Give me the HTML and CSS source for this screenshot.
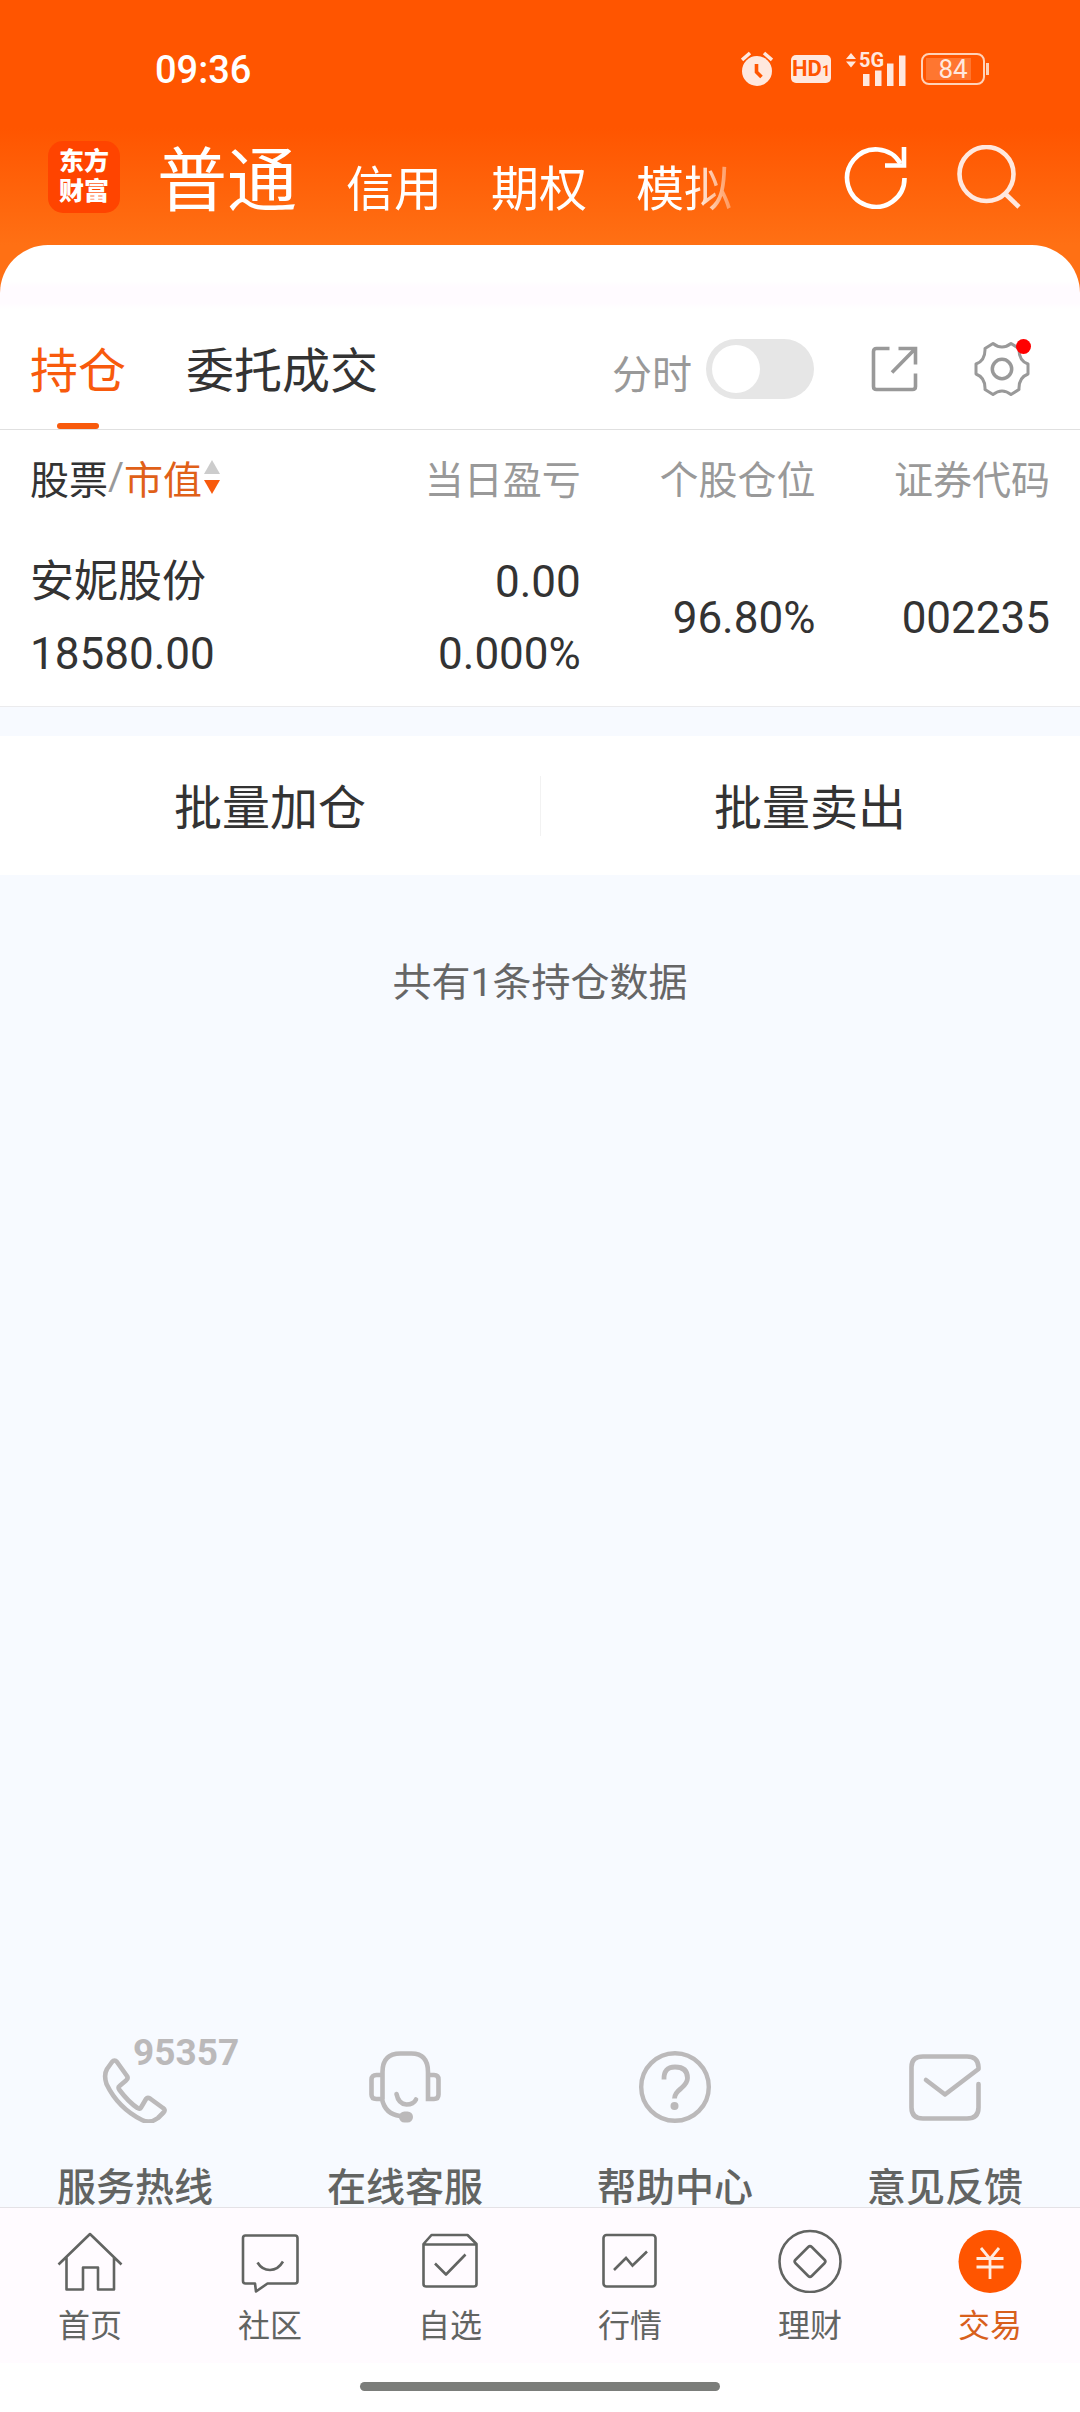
FILE: index.html
```html
<!DOCTYPE html>
<html lang="zh-CN">
<head>
<meta charset="utf-8">
<meta name="viewport" content="width=device-width, initial-scale=1">
<title>东方财富 - 交易</title>
<link rel="stylesheet" href="styles.css">
</head>
<body>
<header class="top">
  <div class="status">
    <span class="clock">09:36</span>
    <div class="status-icons">
      <svg class="alarm" width="32" height="36" viewBox="0 0 32 36" aria-hidden="true">
        <circle cx="16" cy="20" r="15" fill="currentColor"/>
        <path d="M1 9 9 2M31 9 23 2" stroke="currentColor" stroke-width="3.6"/>
        <path d="M15.500 13v8l5 5" fill="none" stroke="#ff5500" stroke-width="3.6"/>
      </svg>
      <span class="hd">HD<small>1</small></span>
      <span class="signal">
        <svg width="60" height="34" viewBox="0 0 60 34" aria-hidden="true">
          <path d="M0 7 5 1l5 6zM0 9.500h10l-5 6z" fill="currentColor"/>
          <path d="M17 22h6.500v12H17zM29 18.500h6.500V34H29zM41 11.500h6.500V34H41zM53 3.500h6.500V34H53z" fill="currentColor"/>
        </svg>
        <span class="net">5G</span>
      </span>
      <span class="battery"><span class="level">84</span></span>
    </div>
  </div>
  <div class="titlebar">
    <a class="logo" href="#"><span>东方</span><span>财富</span></a>
    <nav class="accounts" aria-label="账户">
      <a class="current" href="#">普通</a>
      <a href="#">信用</a>
      <a href="#">期权</a>
      <a href="#">模拟</a>
    </nav>
    <div class="title-actions">
      <button type="button" aria-label="刷新">
        <svg width="64" height="64" viewBox="0 0 64 64" fill="none" stroke="currentColor" stroke-width="4.600">
          <path d="M60.500 33A28.700 28.700 0 1 1 56.500 18.500"/>
          <path d="M60 2v18.500H41"/>
        </svg>
      </button>
      <button class="search" type="button" aria-label="搜索">
        <svg width="64" height="64" viewBox="0 0 64 64" fill="none" stroke="currentColor" stroke-width="4.600">
          <circle cx="29.500" cy="29" r="27"/>
          <path d="M48 48.500 62 62"/>
        </svg>
      </button>
    </div>
  </div>
  <div class="sheet-cap"></div>
</header>

<main class="content">
  <div class="tabs">
    <a class="tab active" href="#">持仓</a>
    <a class="tab" href="#">委托成交</a>
    <div class="tools">
      <label class="switch"><span>分时</span><input type="checkbox" role="switch"></label>
      <button type="button" aria-label="分享">
        <svg width="48" height="48" viewBox="0 0 48 48" fill="none" stroke="currentColor" stroke-width="3.600">
          <path d="M19.500 3.500H6.500q-3 0-3 3v35q0 3 3 3h36q3 0 3-3V28.500"/>
          <path d="M28.500 3.500H45.500V19.500M45 4 22 27.500"/>
        </svg>
      </button>
      <button class="gear" type="button" aria-label="设置">
        <svg width="56" height="56" viewBox="-28 -28 56 56" fill="none" stroke="currentColor" stroke-width="3" stroke-linejoin="round">
          <path d="M-9-25.500Q0-18.500 9-25.500L17-20.500Q16.500-8.500 26-5V5Q16.500 8.500 17 20.500L9 25.500Q0 18.500-9 25.500L-17 20.500Q-16.500 8.500-26 5V-5Q-16.500-8.500-17-20.500Z"/>
          <circle r="9.700" stroke-width="3.500"/>
        </svg>
      </button>
    </div>
  </div>

  <table class="holdings">
    <colgroup><col><col class="profit"><col class="share"><col class="code"></colgroup>
    <thead>
      <tr>
        <th scope="col"><span class="sort"><b>股票</b><i>/</i><em>市值</em>
          <svg width="16" height="34" viewBox="0 0 16 34" aria-hidden="true"><path d="M0 14 8 0l8 14z" fill="#ccc"/><path d="M0 20h16L8 34z" fill="#f85a0c"/></svg></span></th>
        <th scope="col">当日盈亏</th>
        <th scope="col">个股仓位</th>
        <th scope="col">证券代码</th>
      </tr>
    </thead>
    <tbody>
      <tr>
        <td>安妮股份<br>18580.00</td>
        <td>0.00<br>0.000%</td>
        <td>96.80%</td>
        <td>002235</td>
      </tr>
    </tbody>
  </table>

  <div class="batch">
    <button type="button">批量加仓</button>
    <button type="button">批量卖出</button>
  </div>

  <p class="total">共有1条持仓数据</p>

  <div class="services">
    <a class="hotline" href="#">
      <span class="number">95357</span>
      <svg width="72" height="72" viewBox="0 0 72 72" fill="none" stroke="currentColor" stroke-width="4.600" stroke-linejoin="round">
        <path d="M13 11q2.500-3 5 0L28 25q1.500 2.500-1 4.500L20.500 35q-2 1.500 0 4 9 12 18 18 2 1.500 3.500-.500L47 48q1.500-2 4-.500L64 57q3 2 .500 4.500L59 67q-8 6-16 2Q19 57 7.500 33 4.500 24 8 18Z"/>
      </svg>
      服务热线
    </a>
    <a href="#">
      <svg width="72" height="72" viewBox="0 0 72 72" fill="none" stroke="currentColor" stroke-width="4.600" stroke-linecap="round">
        <path d="M13.500 48V21q0-18.500 18-18.500h11q16.500 0 16.500 18.500V48h6q4.500 0 4.500-4.500v-15q0-4.500-4.500-4.500h-5M13 24H7.500q-5 0-5 4.500v15q0 4.500 5 4.500H13q3 15 18 17"/>
        <path d="M27.500 43q2 10 10 10.500 7 0 9.500-5"/>
        <rect x="30" y="60.500" width="14" height="11" rx="5.500" fill="currentColor" stroke="none"/>
      </svg>
      在线客服
    </a>
    <a href="#">
      <svg width="72" height="72" viewBox="0 0 72 72" fill="none" stroke="currentColor" stroke-width="4.400">
        <circle cx="36" cy="36" r="33.800"/>
        <path d="M25 28.500q-.500-12.500 11-12.500 12.500 0 12.500 11 0 5-6.500 10.500-6.500 5-6.500 10" stroke-width="4.800"/>
        <circle cx="35.500" cy="55" r="4" fill="currentColor" stroke="none"/>
      </svg>
      帮助中心
    </a>
    <a href="#">
      <svg width="72" height="72" viewBox="0 0 72 72" fill="none" stroke="currentColor" stroke-width="4.600" stroke-linecap="round" stroke-linejoin="round">
        <path d="M17 29 36 43.500 69.500 18V16Q69 5.500 58 5.500H14Q2.500 5.500 2.500 16V56.500Q2.500 67.500 14 67.500H58Q69.500 67.500 69.500 56.500V33"/>
      </svg>
      意见反馈
    </a>
  </div>
</main>

<nav class="bottom-nav" aria-label="主导航">
  <a href="#">
    <svg width="66" height="64" viewBox="0 0 66 64" fill="none" stroke="currentColor" stroke-width="2.600" stroke-linejoin="round">
      <path d="M1.500 35.500 33 5 64.500 35.500M9.500 28.500V60.500H26V38.500H41V60.500H57V28.500"/>
    </svg>
    首页
  </a>
  <a href="#">
    <svg width="66" height="64" viewBox="0 0 66 64" fill="none" stroke="currentColor" stroke-width="2.600" stroke-linejoin="round">
      <path d="M8 6.500H58q2.500 0 2.500 2.500V52q0 2.500-2.500 2.500H30.500L19 62.500 18 54.500H8.500Q6 54.500 6 52V9Q6 6.500 8.500 6.500Z"/>
      <path d="M20.500 33.500Q25 41 33 41T46 32.500"/>
    </svg>
    社区
  </a>
  <a href="#">
    <svg width="66" height="64" viewBox="0 0 66 64" fill="none" stroke="currentColor" stroke-width="2.600" stroke-linejoin="round">
      <path d="M6.500 15 14.500 6H50.500L59.500 15V55q0 2.500-2.500 2.500H9q-2.500 0-2.500-2.500ZM6.500 15.500H59.500"/>
      <path d="M18 34.500 29 45.500 48.500 25.500"/>
    </svg>
    自选
  </a>
  <a href="#">
    <svg width="66" height="64" viewBox="0 0 66 64" fill="none" stroke="currentColor" stroke-width="2.600">
      <rect x="6.500" y="6" width="52" height="51.500" rx="3"/>
      <path d="M17 41 29 29 35.500 36.500 50 22.500"/>
    </svg>
    行情
  </a>
  <a href="#">
    <svg width="66" height="64" viewBox="0 0 66 64" fill="none" stroke="currentColor" stroke-width="2.600">
      <circle cx="33" cy="32.500" r="30.500"/>
      <rect x="21.500" y="21" width="23" height="23" rx="2.500" transform="rotate(45 33 32.500)"/>
    </svg>
    理财
  </a>
  <a class="current" href="#">
    <svg width="66" height="64" viewBox="0 0 66 64" fill="none">
      <circle cx="33" cy="32.500" r="31.500" fill="#ff5500"/>
      <path d="M24 19 33 30 42 19M33 30V50M19.500 29.500H46.500M19.500 38H46.500" stroke="#ffece0" stroke-width="2.800"/>
    </svg>
    交易
  </a>
</nav>
<div class="home-indicator"></div>
</body>
</html>
```
FILE: styles.css
```css
* {
  box-sizing: border-box;
}

body {
  margin: 0;
  min-height: 100vh;
  display: flex;
  flex-direction: column;
  background: #fff;
  color: #333;
  font-family: Roboto, "Noto Sans CJK SC", sans-serif;
}

a {
  color: inherit;
  text-decoration: none;
}

button {
  margin: 0;
  padding: 0;
  border: 0;
  background: none;
  color: inherit;
  font: inherit;
}

svg {
  display: block;
}

/* Header */
.top {
  background: linear-gradient(#ff5500 128px, #ff7014 245px);
  color: #fff;
}

.status {
  height: 138px;
  padding: 0 95px 0 155px;
  display: flex;
  align-items: center;
  justify-content: space-between;
}

.clock {
  padding-top: 2px;
  font-size: 38px;
  font-weight: 500;
}

.status-icons {
  display: flex;
  align-items: center;
  gap: 15px;
  color: #ffe8de;
}

.alarm {
  margin-right: 3px;
}

.hd {
  width: 40px;
  height: 28px;
  border-radius: 5px;
  background: #ffe8de;
  color: #ff5500;
  font-size: 22px;
  font-weight: 700;
  line-height: 28px;
  text-align: center;
  white-space: nowrap;
}

.hd small {
  font-size: 14px;
}

.signal {
  position: relative;
}

.net {
  position: absolute;
  left: 13px;
  top: 0;
  font-size: 20px;
  font-weight: 700;
  line-height: 17px;
}

.battery {
  position: relative;
  width: 64px;
  height: 32px;
  padding: 3px;
  border: 2px solid #ffd2b8;
  border-radius: 8px;
}

.battery::after {
  content: "";
  position: absolute;
  right: -6px;
  top: 8px;
  width: 3px;
  height: 12px;
  background: #ffd2b8;
}

.level {
  display: block;
  height: 22px;
  background: linear-gradient(to right, #ff7630 84%, transparent 84%);
  color: #ffe8de;
  font-size: 26px;
  line-height: 22px;
  text-align: center;
}

.titlebar {
  height: 78px;
  padding: 0 59px 0 48px;
  display: flex;
  align-items: center;
}

.logo {
  width: 72px;
  height: 72px;
  border-radius: 15px;
  background: #ff4400;
  display: flex;
  flex-direction: column;
  align-items: center;
  justify-content: center;
  font-size: 25px;
  font-weight: 900;
  line-height: 30px;
}

.accounts {
  margin: 0 auto 0 37px;
  padding-top: 18px;
  display: flex;
  align-items: baseline;
  gap: 49px;
  font-size: 48px;
  line-height: 78px;
  white-space: nowrap;
  mask-image: linear-gradient(to right, #000 calc(100% - 40px), rgba(0, 0, 0, 0.3));
}

.accounts .current {
  font-size: 70px;
}

.title-actions {
  display: flex;
  gap: 49px;
}

.search {
  color: #ffe8de;
}

.sheet-cap {
  height: 64px;
  margin-top: 29px;
  border-radius: 48px 48px 0 0;
  background: linear-gradient(#fff 36px, #fffbff 42px, #fffbff 58px, #fff);
}

/* Content */
.content {
  flex: 1;
  display: flex;
  flex-direction: column;
  background: #f7faff;
}

.tabs {
  height: 121px;
  padding: 0 50px 0 30px;
  border-bottom: 1px solid #e0e0e0;
  background: #fff;
  display: flex;
  align-items: stretch;
  gap: 60px;
  font-size: 48px;
}

.tab {
  position: relative;
  line-height: 126px;
}

.tab.active {
  color: #f85a0c;
}

.tab.active::after {
  content: "";
  position: absolute;
  left: calc(50% - 21px);
  bottom: 0;
  width: 42px;
  height: 6px;
  border-radius: 3px;
  background: #f85a0c;
}

.tools {
  margin-left: auto;
  display: flex;
  align-items: center;
  gap: 56px;
  color: #999;
}

.switch {
  display: flex;
  align-items: center;
  gap: 14px;
  font-size: 40px;
}

.switch span {
  padding-top: 5px;
}

.switch input {
  appearance: none;
  width: 108px;
  height: 60px;
  margin: 0;
  padding: 6px;
  border-radius: 30px;
  background: #e6e6e6;
}

.switch input::before {
  content: "";
  display: block;
  width: 48px;
  height: 48px;
  border-radius: 50%;
  background: #fff;
}

.switch input:checked {
  background: #f85a0c;
}

.switch input:checked::before {
  margin-left: auto;
}

.gear {
  position: relative;
}

.gear::after {
  content: "";
  position: absolute;
  right: -1px;
  top: -2px;
  width: 15px;
  height: 15px;
  border-radius: 50%;
  background: #f00;
}

.holdings {
  width: 100%;
  padding: 0 30px;
  border-spacing: 0;
  border-bottom: 1px solid #ebebed;
  background: #fff;
  table-layout: fixed;
  text-align: right;
}

.profit {
  width: 25%;
}

.share,
.code {
  width: 23%;
}

.holdings th {
  height: 100px;
  padding: 0 0 6px;
  color: #999;
  font-size: 39px;
  font-weight: 400;
  text-align: right;
}

.holdings td {
  height: 176px;
  padding: 0;
  font-size: 44px;
  line-height: 72px;
}

.holdings th:first-child,
.holdings td:first-child {
  text-align: left;
}

.sort {
  display: flex;
  align-items: center;
}

.sort b,
.sort i,
.sort em {
  font-style: normal;
  font-weight: 400;
}

.sort b {
  color: #333;
}

.sort em {
  color: #e06018;
}

.sort svg {
  margin-left: 2px;
}

.batch {
  margin-top: 29px;
  background: #fff;
  display: flex;
}

.batch button {
  flex: 1;
  height: 139px;
  padding-bottom: 3px;
  font-size: 48px;
}

.batch button + button {
  background: linear-gradient(#f2f2f2, #f2f2f2) left center / 1px 60px no-repeat;
}

.total {
  margin: 78px 0;
  color: #666;
  font-size: 39px;
  line-height: 60px;
  text-align: center;
}

.services {
  margin-top: auto;
  display: flex;
  color: #bbb9ba;
}

.services a {
  position: relative;
  flex: 1;
  display: flex;
  flex-direction: column;
  align-items: center;
  gap: 47px;
  color: #626462;
  font-size: 39px;
  font-weight: 500;
  line-height: 37px;
}

.services svg {
  color: #bbb9ba;
}

.number {
  position: absolute;
  left: calc(50% - 2px);
  top: -17px;
  color: #bbb9ba;
  font-size: 37px;
  font-weight: 700;
}

/* Bottom navigation */
.bottom-nav {
  height: 156px;
  padding-top: 21px;
  border-top: 1px solid #e4e2e6;
  background: #fffbff;
  display: flex;
  color: #626462;
  font-size: 32px;
  line-height: 42px;
}

.bottom-nav a {
  flex: 1;
  display: flex;
  flex-direction: column;
  align-items: center;
  gap: 12px;
}

.bottom-nav .current {
  color: #d8601c;
}

.home-indicator {
  width: 33.3333%;
  height: 9px;
  margin: 19px auto 21px;
  border-radius: 5px;
  background: #7b7d7a;
}
```
